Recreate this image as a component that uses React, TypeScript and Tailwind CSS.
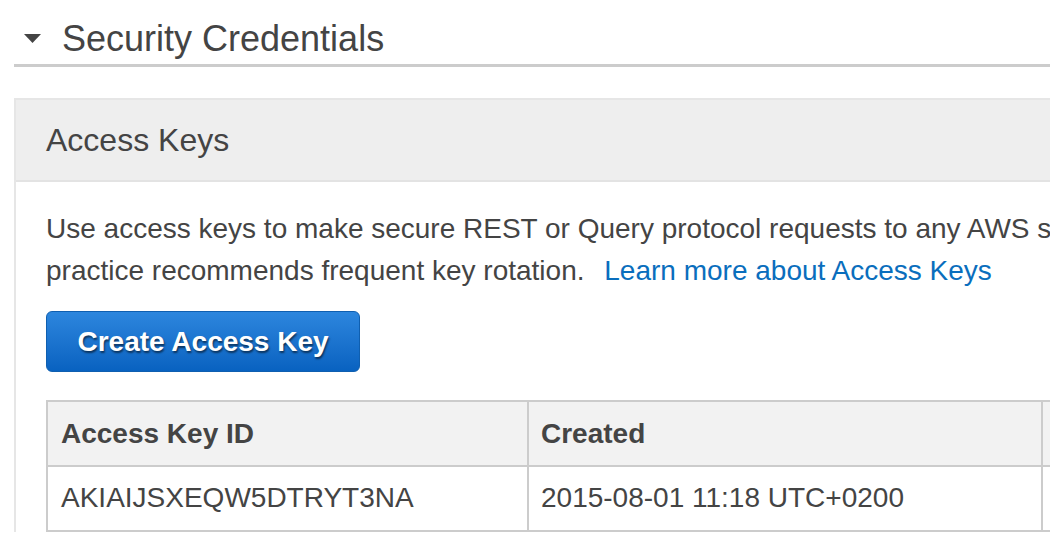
export default function App() {
  return (
    <div className="w-[1050px] h-[558px] overflow-hidden bg-white text-[#444] font-['Liberation_Sans',Arial,sans-serif]">
      {/* Section title */}
      <div className="ml-[14px] w-[1200px] h-[67px] border-b-[3px] border-[#cccccc] flex items-center pt-[14px]">
        <svg width="17" height="9" viewBox="0 0 17 9" className="ml-[10px] mr-[22px] -mt-[2px]">
          <polygon points="0,0 17,0 8.5,9" fill="#444" />
        </svg>
        <h1 className="text-[36px] leading-none -ml-[1px]">Security Credentials</h1>
      </div>

      {/* Panel */}
      <div className="ml-[14px] mt-[31px] w-[1200px] border-l-2 border-t-2 border-[#e6e6e6]">
        <div className="h-[82px] bg-[#eeeeee] border-b-2 border-[#e3e3e3] flex items-center pl-[30px]">
          <h2 className="text-[32px] leading-none">Access Keys</h2>
        </div>

        <div className="pl-[30px] pt-[26px]">
          <p className="text-[28px] leading-[42px] whitespace-nowrap">
            Use access keys to make secure REST or Query protocol requests to any AWS service API. For your protection, you should never share your secret keys with anyone. As a best
            <br />
            practice recommends frequent key rotation.{' '}
            <a href="#" className="text-[#0a6ebd] ml-[12px]">Learn more about Access Keys</a>
          </p>

          <button className="mt-[19px] w-[314px] h-[61px] rounded-[6px] border border-[#0f5fb0] bg-gradient-to-b from-[#2c86de] to-[#0862c0] text-white font-bold text-[28px] [text-shadow:1px_2px_2px_rgba(0,0,0,0.55)]">
            Create Access Key
          </button>

          <table className="mt-[28px] w-[1100px] border-collapse border-2 border-[#cccccc] text-[28px]">
            <thead>
              <tr className="bg-[#f2f2f2] h-[65px]">
                <th className="w-[481px] border-2 border-[#cccccc] text-left font-bold pl-[13px]">Access Key ID</th>
                <th className="w-[514px] border-2 border-[#cccccc] text-left font-bold pl-[12px]">Created</th>
                <th className="border-2 border-[#cccccc] text-left font-bold pl-[12px]"></th>
              </tr>
            </thead>
            <tbody>
              <tr className="h-[65px]">
                <td className="border-2 border-[#cccccc] pl-[13px] pb-[2px]">AKIAIJSXEQW5DTRYT3NA</td>
                <td className="border-2 border-[#cccccc] pl-[12px] pb-[2px]">2015-08-01 11:18 UTC+0200</td>
                <td className="border-2 border-[#cccccc] pl-[12px]"></td>
              </tr>
            </tbody>
          </table>
        </div>
      </div>
    </div>
  );
}
